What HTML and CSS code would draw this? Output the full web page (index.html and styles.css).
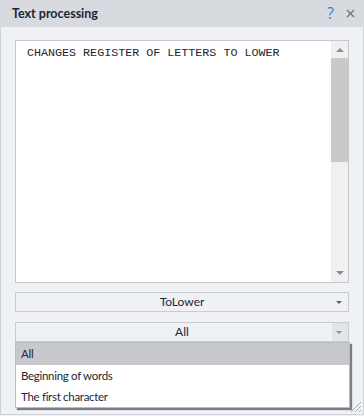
FILE: index.html
```html
<!DOCTYPE html>
<html lang="en">
<head>
    <meta charset="UTF-8">
    <meta name="viewport" content="width=device-width, initial-scale=1.0">
    <title>Text processing</title>
    <link rel="stylesheet" href="styles.css">
</head>
<body>
    <div class="window">
        <div class="titlebar">
            <span class="title">Text processing</span>
            <span class="help">?</span>
            <svg class="close" width="9" height="9" viewBox="0 0 9 9">
                <path d="M1 1L8 8M8 1L1 8" stroke="#6e7582" stroke-width="1.4"/>
            </svg>
        </div>
        <div class="content">
            <div class="editor">
                <div class="editor-text">CHANGES REGISTER OF LETTERS TO LOWER</div>
                <div class="scrollbar">
                    <div class="arrow-up"></div>
                    <div class="thumb"></div>
                    <div class="arrow-down"></div>
                </div>
            </div>
            <div class="combo">
                <span class="combo-text">ToLower</span>
                <span class="combo-btn"><span class="caret"></span></span>
            </div>
            <div class="combo open">
                <span class="combo-text">All</span>
                <span class="combo-btn"><span class="caret light"></span></span>
                <div class="dropdown">
                    <div class="item selected">All</div>
                    <div class="item">Beginning of words</div>
                    <div class="item">The first character</div>
                </div>
            </div>
        </div>
        <svg class="grip" width="12" height="12" viewBox="0 0 12 12">
            <path d="M11 1L1 11M11 5L5 11M11 9L9 11" stroke="#a9adb4" stroke-width="1"/>
        </svg>
    </div>
</body>
</html>
```

FILE: styles.css
```css
body {
    margin: 0;
    font-family: 'Lato', 'Noto Sans', sans-serif;
    background: #eff1f5;
}
.window {
    position: relative;
    width: 362px;
    height: 414px;
    background: #eff1f5;
    border: 1px solid #cfd2d7;
    border-top: none;
}
.titlebar {
    height: 27px;
    background: #d7dade;
    display: flex;
    align-items: center;
    padding: 0 8px 0 12px;
    margin: 0 -1px;
}
.title {
    flex: 1;
    font-weight: bold;
    font-size: 12.5px;
    color: #1c2736;
}
.help {
    color: #3c7ddb;
    font-family: 'Open Sans', sans-serif;
    font-size: 16px;
    margin-right: 12px;
    margin-top: -1px;
}
.close {
    margin-right: 1px;
}
.content {
    padding: 13px 14px 0 14px;
}
.editor {
    height: 241px;
    background: #fff;
    border: 1px solid #c6c9ce;
    display: flex;
}
.editor-text {
    flex: 1;
    font-family: 'Liberation Mono', monospace;
    font-size: 11.7px;
    color: #1d2430;
    padding: 5px 0 0 11px;
}
.scrollbar {
    width: 17px;
    background: #f0f0f0;
    display: flex;
    flex-direction: column;
    align-items: center;
}
.arrow-up, .arrow-down {
    width: 0;
    height: 0;
    border-left: 4px solid transparent;
    border-right: 4px solid transparent;
}
.arrow-up {
    border-bottom: 4px solid #8b8c98;
    margin: 7px 0 6px;
}
.arrow-down {
    border-top: 4px solid #8b8c98;
    margin: auto 0 7px;
}
.thumb {
    width: 17px;
    height: 104px;
    background: #c9c9c9;
}
.combo {
    position: relative;
    height: 18px;
    margin-top: 9px;
    border: 1px solid #c8cbd0;
    display: flex;
    font-size: 12px;
    color: #1c2838;
}
.combo.open {
    margin-top: 10px;
}
.combo-text {
    flex: 1;
    text-align: center;
    line-height: 18px;
    padding-left: 16px;
}
.combo-btn {
    width: 16px;
    display: flex;
    align-items: center;
    justify-content: center;
}
.open .combo-btn {
    background: #e2e4e8;
}
.caret {
    width: 0;
    height: 0;
    border-left: 3.5px solid transparent;
    border-right: 3.5px solid transparent;
    border-top: 3px solid #5d6066;
    margin-left: -2px;
}
.caret.light {
    border-top-color: #8d9096;
}
.dropdown {
    position: absolute;
    left: -1px;
    top: 19px;
    width: 333px;
    background: #fff;
    border: 1px solid #b9bcc1;
    box-shadow: 2px 2px 1px rgba(60, 64, 70, 0.65);
    z-index: 2;
}
.item {
    height: 21px;
    line-height: 21px;
    padding-left: 5px;
    font-size: 11.5px;
    letter-spacing: -0.3px;
    color: #1c2838;
}
.item.selected {
    height: 22px;
    line-height: 22px;
    background: #c7c8cc;
}
.grip {
    position: absolute;
    right: 1px;
    bottom: 1px;
}
```
